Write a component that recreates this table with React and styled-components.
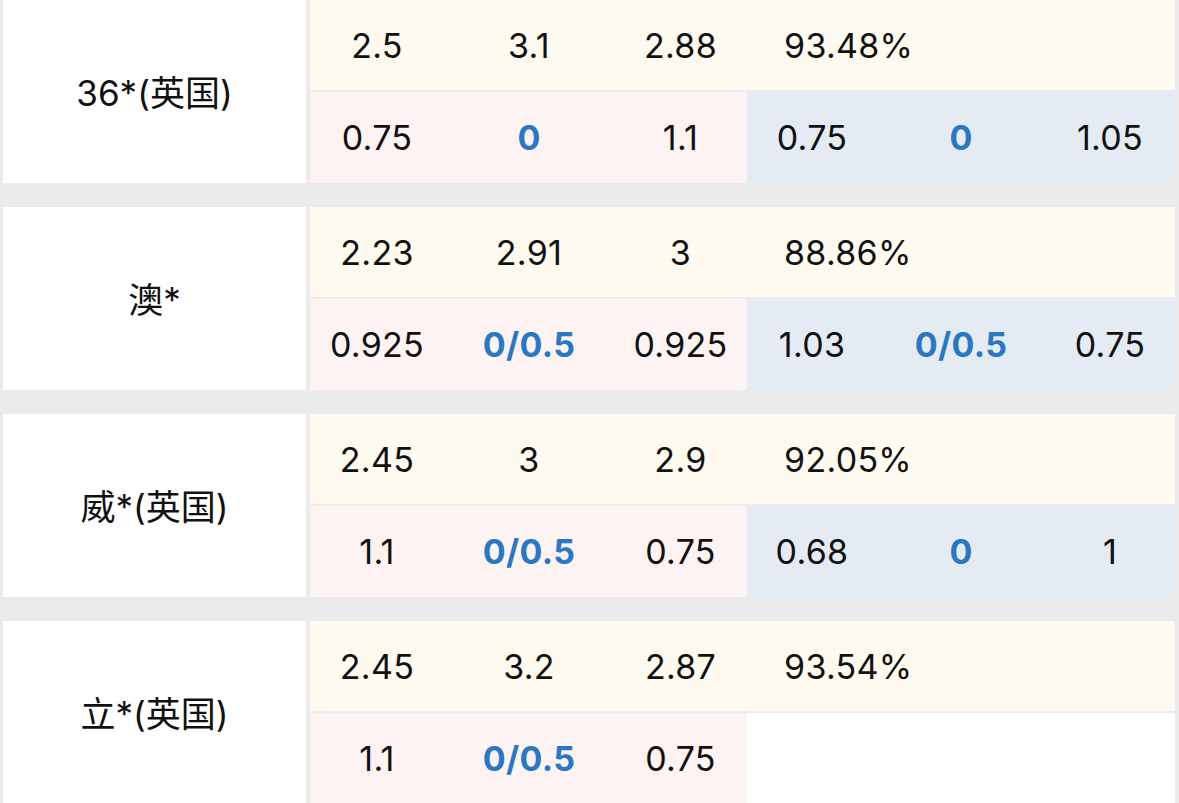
import React from "react";
import styled, { createGlobalStyle } from "styled-components";

const GlobalStyle = createGlobalStyle`
  html, body {
    margin: 0;
    padding: 0;
    background: #ebebeb;
  }
  body {
    font-family: Inter, "Noto Sans CJK SC", "Liberation Sans", sans-serif;
    color: #111;
  }
`;

const Page = styled.div`
  width: 1179px;
  height: 803px;
  overflow: hidden;
  box-sizing: border-box;
  padding: 0 4px 0 3px;
  display: flex;
  flex-direction: column;
  gap: 24px;
  background: #ebebeb;
`;

const Group = styled.div`
  display: grid;
  grid-template-columns: 303px 1fr;
  column-gap: 4px;
  flex: none;
`;

const Label = styled.div`
  background: #ffffff;
  display: flex;
  align-items: center;
  justify-content: center;
  font-family: Inter, "Noto Sans CJK SC", sans-serif;
  font-size: 35px;
  color: #111;
  padding-bottom: 2px;
`;

const Rows = styled.div`
  display: flex;
  flex-direction: column;
  gap: 2px;
  background: #ececec;
`;

const cols = "134px 170px 133px 130px 168px 130px";

const TopRow = styled.div`
  display: grid;
  grid-template-columns: ${cols};
  height: 90px;
  background: #fffaef;
`;

const BottomRow = styled.div`
  display: grid;
  grid-template-columns: ${cols};
  height: 91px;
`;

const tones = {
  cream: "transparent",
  pink: "#fdf3f3",
  blue: "#e4ebf3",
  white: "#ffffff",
};

const Cell = styled.div`
  display: flex;
  align-items: center;
  justify-content: center;
  background: ${(p) => tones[p.$tone || "cream"]};
  font-size: 34px;
  font-weight: ${(p) => (p.$accent ? 700 : 400)};
  color: ${(p) => (p.$accent ? "#2b78c2" : "#111")};
  letter-spacing: 0.3px;
`;

const Percent = styled.div`
  grid-column: 4 / 7;
  display: flex;
  align-items: center;
  padding-left: 37px;
  font-size: 34px;
  letter-spacing: 0.3px;
  color: #111;
`;

const Filler = styled.div`
  grid-column: 4 / 7;
  background: #ffffff;
`;

const data = [
  {
    name: "36*(英国)",
    top: ["2.5", "3.1", "2.88", "93.48%"],
    pink: ["0.75", "0", "1.1"],
    blue: ["0.75", "0", "1.05"],
  },
  {
    name: "澳*",
    top: ["2.23", "2.91", "3", "88.86%"],
    pink: ["0.925", "0/0.5", "0.925"],
    blue: ["1.03", "0/0.5", "0.75"],
  },
  {
    name: "威*(英国)",
    top: ["2.45", "3", "2.9", "92.05%"],
    pink: ["1.1", "0/0.5", "0.75"],
    blue: ["0.68", "0", "1"],
  },
  {
    name: "立*(英国)",
    top: ["2.45", "3.2", "2.87", "93.54%"],
    pink: ["1.1", "0/0.5", "0.75"],
    blue: null,
  },
];

export default function App() {
  return (
    <>
      <GlobalStyle />
      <Page>
        {data.map((g) => (
          <Group key={g.name}>
            <Label>{g.name}</Label>
            <Rows>
              <TopRow>
                <Cell>{g.top[0]}</Cell>
                <Cell>{g.top[1]}</Cell>
                <Cell>{g.top[2]}</Cell>
                <Percent>{g.top[3]}</Percent>
              </TopRow>
              <BottomRow>
                {g.pink.map((v, i) => (
                  <Cell key={"p" + i} $tone="pink" $accent={i === 1}>
                    {v}
                  </Cell>
                ))}
                {g.blue ? (
                  g.blue.map((v, i) => (
                    <Cell key={"b" + i} $tone="blue" $accent={i === 1}>
                      {v}
                    </Cell>
                  ))
                ) : (
                  <Filler />
                )}
              </BottomRow>
            </Rows>
          </Group>
        ))}
      </Page>
    </>
  );
}
